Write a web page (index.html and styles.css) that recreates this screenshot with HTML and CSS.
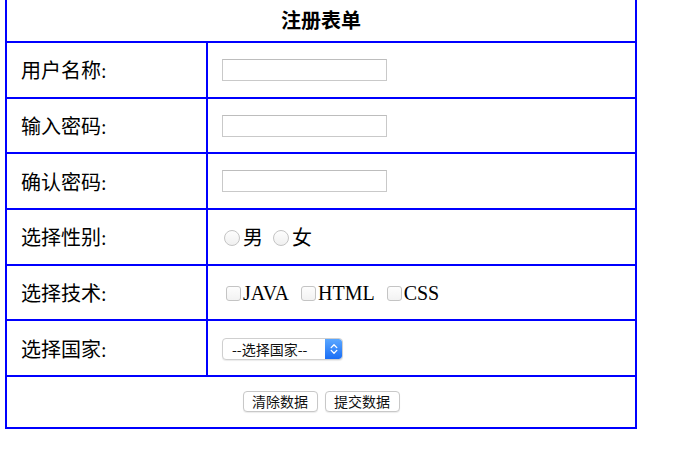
FILE: index.html
```html
<!DOCTYPE html>
<html lang="zh">
<head>
<meta charset="utf-8">
<title>注册表单</title>
<link rel="stylesheet" href="styles.css">
</head>
<body>
<form class="reg-form">
<table class="form-table">
  <tr class="row-title"><th colspan="2" class="title">注册表单</th></tr>
  <tr class="row">
    <td class="label">用户名称:</td>
    <td class="field"><input class="text-input" type="text"></td>
  </tr>
  <tr class="row">
    <td class="label">输入密码:</td>
    <td class="field"><input class="text-input" type="password"></td>
  </tr>
  <tr class="row">
    <td class="label">确认密码:</td>
    <td class="field"><input class="text-input" type="password"></td>
  </tr>
  <tr class="row">
    <td class="label">选择性别:</td>
    <td class="field">
      <div class="options options-radio">
        <label class="opt"><input type="radio" name="sex" class="radio">男</label>
        <label class="opt"><input type="radio" name="sex" class="radio">女</label>
      </div>
    </td>
  </tr>
  <tr class="row">
    <td class="label">选择技术:</td>
    <td class="field">
      <div class="options">
        <label class="opt"><input type="checkbox" class="check">JAVA</label>
        <label class="opt"><input type="checkbox" class="check">HTML</label>
        <label class="opt"><input type="checkbox" class="check">CSS</label>
      </div>
    </td>
  </tr>
  <tr class="row">
    <td class="label">选择国家:</td>
    <td class="field">
      <div class="select-box">
        <select class="select">
          <option>--选择国家--</option>
          <option>中国</option>
          <option>美国</option>
        </select>
        <span class="stepper">
          <svg width="8" height="12" viewBox="0 0 8 12"><path d="M1.2 4.6 L4 1.8 L6.8 4.6 M1.2 7.4 L4 10.2 L6.8 7.4" fill="none" stroke="#fff" stroke-width="1.3" stroke-linecap="round" stroke-linejoin="round"/></svg>
        </span>
      </div>
    </td>
  </tr>
  <tr class="row-actions">
    <td colspan="2" class="actions">
      <button type="reset" class="btn">清除数据</button>
      <button type="submit" class="btn">提交数据</button>
    </td>
  </tr>
</table>
</form>
</body>
</html>
```

FILE: styles.css
```css
html, body {
  margin: 0;
  padding: 0;
  background: #fff;
}

body {
  font-family: "Liberation Serif", "Noto Sans CJK SC", serif;
  font-size: 20px;
  color: #000;
  overflow: hidden;
}

.reg-form {
  margin: 0;
}

.form-table {
  border-collapse: collapse;
  width: 632px;
  margin: -9px 0 0 5px;
}

.form-table th,
.form-table td {
  border: 2px solid #0000ff;
  padding: 0;
}

.row-title {
  height: 50px;
}

.form-table .title {
  font-weight: bold;
  text-align: center;
  font-size: 20px;
  padding-top: 4px;
}

.row {
  height: 55.7px;
}

.row-actions {
  height: 52px;
}

.form-table .label {
  width: 185px;
  padding-left: 14px;
  text-align: left;
  vertical-align: middle;
}

.form-table .field {
  padding-left: 14px;
  vertical-align: middle;
}

.text-input {
  display: block;
  box-sizing: border-box;
  width: 165px;
  height: 22px;
  margin: 0;
  border: 1px solid #c9c9c9;
  border-top-color: #bdbdbd;
  background: #fff;
  outline: none;
  font-size: 13px;
  padding: 0 3px;
}

.options {
  display: flex;
  align-items: center;
  gap: 8px;
  line-height: 24px;
}

.options-radio {
  padding-top: 3px;
}

.opt {
  display: flex;
  align-items: center;
}

.radio {
  appearance: none;
  -webkit-appearance: none;
  box-sizing: border-box;
  width: 16px;
  height: 16px;
  margin: 0 3px 0 2px;
  border: 1px solid #c4c4c4;
  border-radius: 50%;
  background: linear-gradient(#fdfdfd, #f0f0f0);
}

.check {
  appearance: none;
  -webkit-appearance: none;
  box-sizing: border-box;
  width: 15px;
  height: 15px;
  margin: 1px 2px 0 4px;
  border: 1px solid #c4c4c4;
  border-radius: 3px;
  background: linear-gradient(#fdfdfd, #f2f2f2);
}

.select-box {
  display: inline-flex;
  align-items: stretch;
  box-sizing: border-box;
  width: 121px;
  height: 22px;
  border: 1px solid #cfcfcf;
  border-radius: 4px;
  background: #fff;
  box-shadow: 0 1px 1px rgba(0, 0, 0, 0.08);
  vertical-align: middle;
  overflow: hidden;
}

.select {
  appearance: none;
  -webkit-appearance: none;
  flex: 1;
  min-width: 0;
  border: 0;
  margin: 0;
  padding: 0 0 0 9px;
  background: transparent;
  font-family: "Noto Sans CJK SC", sans-serif;
  font-size: 14px;
  color: #111;
  outline: none;
}

.stepper {
  width: 17px;
  display: flex;
  align-items: center;
  justify-content: center;
  background: linear-gradient(#5aa7ff, #1a6ef5);
  border-radius: 0 3px 3px 0;
}

.form-table .actions {
  text-align: center;
  vertical-align: middle;
  padding-bottom: 3px;
}

.btn {
  box-sizing: border-box;
  height: 21px;
  width: 75px;
  margin: 0 1px;
  padding: 0;
  border: 1px solid #c8c8c8;
  border-radius: 4px;
  background: #fff;
  box-shadow: 0 1px 1px rgba(0, 0, 0, 0.08);
  font-family: "Noto Sans CJK SC", sans-serif;
  font-size: 14px;
  color: #111;
  line-height: 19px;
}
```
